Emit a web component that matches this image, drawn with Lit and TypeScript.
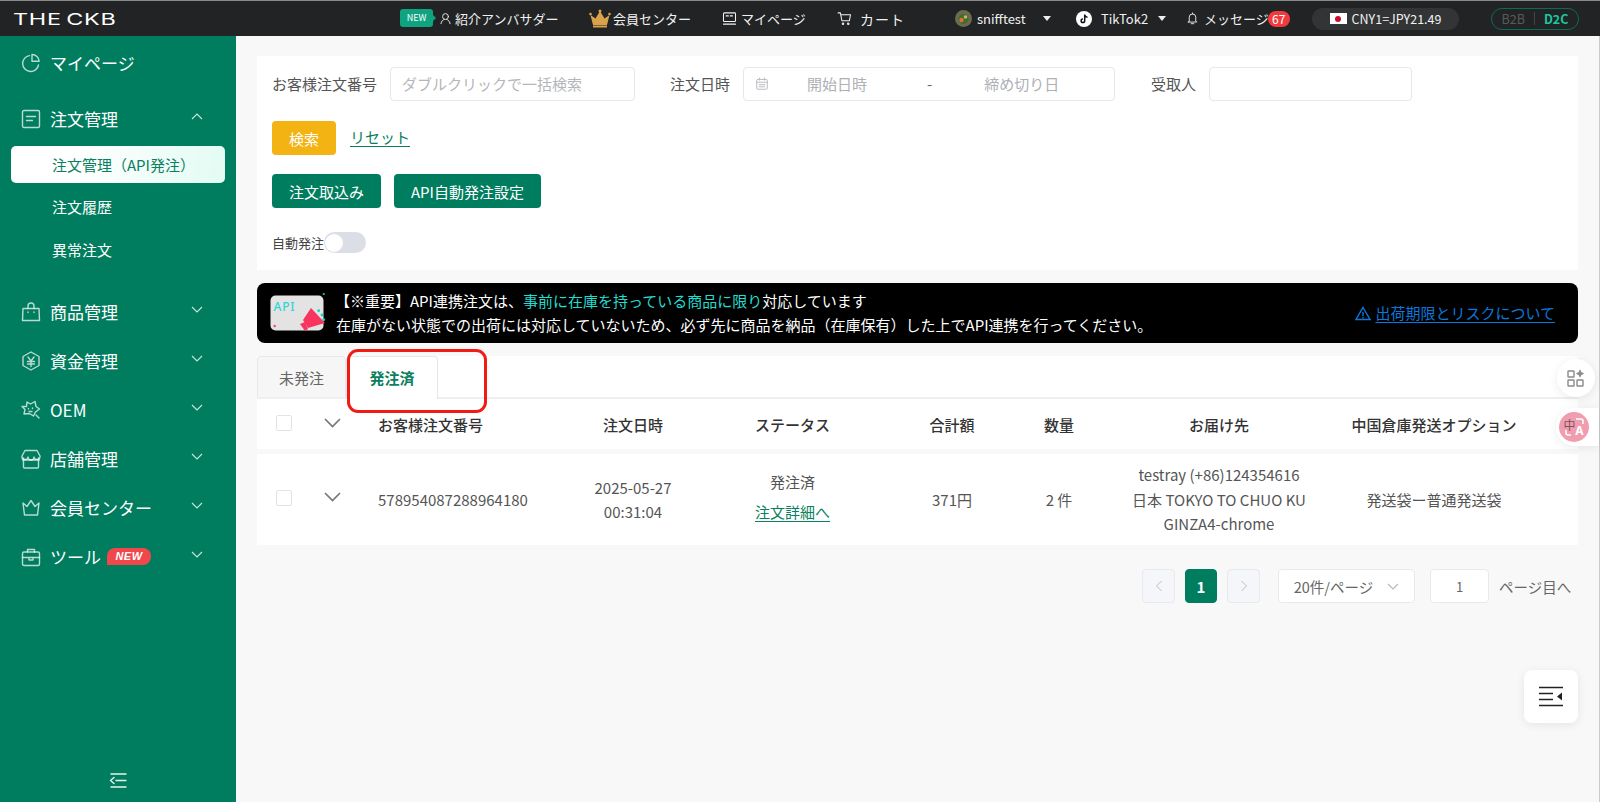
import { LitElement, html, css, svg } from 'lit';
import { customElement } from 'lit/decorators.js';

const GREEN = '#007d5e';

const ic = (body: unknown, size = 20, vb = 20) => html`<svg
  width=${size} height=${size} viewBox="0 0 ${vb} ${vb}" fill="none" stroke="currentColor" stroke-width="1.4"
  stroke-linecap="round" stroke-linejoin="round">${body}</svg>`;

const menuIcons: Record<string, unknown> = {
  home: svg`<path d="M8.5 2.6a8 8 0 1 0 9 9.4"/><path d="M11 1.5v6.8h7.2A7.2 7.2 0 0 0 11 1.5z"/>`,
  order: svg`<rect x="1.5" y="1.5" width="17" height="17" rx="1.5"/><path d="M5.5 7.5h9M5.5 11.5h6"/>`,
  goods: svg`<path d="M2 6.5h16l.5 12h-17z"/><path d="M7 6.5V4a3 3 0 0 1 6 0v2.5M7 10v.5M13 10v.5"/>`,
  money: svg`<path d="M10 1l8 4.5v9L10 19l-8-4.5v-9z"/><path d="M7 6l3 4 3-4M6.500 10.500h7M6.500 13h7M10 10v5.500"/>`,
  oem: svg`<path d="M6 2l3.500 2 4.500-2.500 1 5 3.500 2.500-4 3-2 4-4-2.500-5.500.5 1-4.500L1 6.500 5.500 6.500z"/><path d="M15 15l3 3M7.500 8.500v.5M11.500 8v.5M8 11.500h3"/>`,
  shop: svg`<path d="M4 1.500h12l3 5.500a3 3 0 0 1-6 1 3 3 0 0 1-6 0 3 3 0 0 1-6-1z"/><path d="M1.500 11h17M2.500 9v9a1 1 0 0 0 1 1h13a1 1 0 0 0 1-1V9"/>`,
  member: svg`<path d="M2 5l4 3.500L10 2.500l4 6L18 5l-1.500 12h-13z"/>`,
  tool: svg`<rect x="1.500" y="5" width="17" height="13.500" rx="1.500"/><path d="M6.500 5V2.500h7V5M1.500 10.500h17M8 10.500v2.500h4v-2.500"/>`,
};

const menu = [
  { icon: 'goods', label: '商品管理' },
  { icon: 'money', label: '資金管理' },
  { icon: 'oem', label: 'OEM' },
  { icon: 'shop', label: '店舗管理' },
  { icon: 'member', label: '会員センター' },
  { icon: 'tool', label: 'ツール', isNew: true },
];

const chevron = (up = false) => html`<svg class="chev" width="12" height="7" viewBox="0 0 12 7" fill="none"
  stroke="currentColor" stroke-width="1.100"><path d=${up ? 'M1 6l5-5 5 5' : 'M1 1l5 5 5-5'}/></svg>`;

@customElement('app-root')
export class AppRoot extends LitElement {
  static styles = css`
    :host {
      display: block;
      width: 1600px;
      height: 802px;
      overflow: hidden;
      position: relative;
      background: #f8f8f8;
      font-family: 'Noto Sans CJK JP', 'Noto Sans', sans-serif;
      color: #333;
    }
    svg { display: block; flex: none; }

    /* top bar */
    .top {
      height: 35px;
      border-top: 1px solid #8a8a8a;
      background: #222324;
      color: #f1f1f1;
      display: flex;
      align-items: center;
      font-size: 13px;
      white-space: nowrap;
      box-sizing: content-box;
    }
    .logo {
      margin-left: 13px;
      width: 108px;
      font-family: 'Inter', sans-serif;
      font-weight: 400;
      font-size: 16.500px;
      letter-spacing: 0.5px;
      word-spacing: -2px;
      color: #fff;
      margin-right: 279px;
      transform: scaleX(1.42);
      transform-origin: left center;
    }
    .nav { display: flex; align-items: center; }
    .new-tag {
      width: 33px;
      height: 18px;
      margin-top: -2px;
      background: #0fa37f;
      border-radius: 3px;
      color: #fff;
      font-size: 9px;
      line-height: 18px;
      text-align: center;
      position: relative;
      margin-right: 6px;
    }
    .new-tag::after {
      content: '';
      position: absolute;
      left: 33px;
      top: 6px;
      border: 3px solid transparent;
      border-left-color: #0fa37f;
    }
    .amb { width: 150px; gap: 3px; }
    .vip { width: 133px; gap: 2px; }
    .mine { width: 115px; gap: 4px; }
    .cart { width: 118px; gap: 8px; font-size: 14px; letter-spacing: 1px; }
    .shop { width: 121px; gap: 5px; }
    .tiktok { width: 110px; gap: 9px; }
    .msg { width: 126px; gap: 5px; }
    .caret {
      border: 4px solid transparent;
      border-top: 5px solid #eee;
      border-bottom: 0;
    }
    .shop .caret { margin-left: 12px; }
    .tiktok .caret { margin-left: 1px; }
    .badge {
      margin-left: -6px;
      background: #f03a3e;
      color: #fff;
      width: 22px;
      height: 16px;
      border-radius: 8px;
      font-size: 12px;
      line-height: 16px;
      text-align: center;
    }
    .rate {
      width: 147px;
      height: 22px;
      border-radius: 11px;
      background: #333435;
      display: flex;
      align-items: center;
      justify-content: center;
      gap: 5px;
      font-size: 12.500px;
      margin-right: 32px;
    }
    .flag {
      width: 17px;
      height: 11px;
      background: #fff;
      display: flex;
      align-items: center;
      justify-content: center;
    }
    .flag i { width: 6px; height: 6px; border-radius: 50%; background: #c8102e; }
    .mode {
      width: 88px;
      height: 22px;
      box-sizing: border-box;
      border: 1.500px solid #0d6b54;
      border-radius: 11px;
      display: flex;
      align-items: center;
      justify-content: center;
      gap: 9px;
      font-size: 12.500px;
      color: #5a5a5a;
    }
    .mode i { width: 1px; height: 13px; background: #444; }
    .mode b { color: #18c9a0; font-weight: 700; }

    .body { display: flex; height: 766px; }

    /* side menu */
    .side {
      width: 236px;
      flex: none;
      background: ${css([GREEN] as unknown as TemplateStringsArray)};
      color: #fff;
      padding-top: 2px;
      box-sizing: border-box;
      position: relative;
    }
    .item {
      height: 49px;
      display: flex;
      align-items: center;
      padding-left: 21px;
      font-size: 17px;
      position: relative;
    }
    .item svg.mi { color: rgba(255, 255, 255, 0.72); margin-right: 9px; }
    .item .chev { position: absolute; left: 191px; top: 19px; color: rgba(255, 255, 255, 0.8); }
    .first { margin-bottom: 7px; }
    .tag {
      margin-left: 6px;
      height: 17px;
      width: 44px;
      background: #f0474c;
      border-radius: 8px 8px 8px 0;
      font: italic 700 11px/17px 'Liberation Sans', sans-serif;
      letter-spacing: 0.5px;
      text-align: center;
    }
    .subs { margin-bottom: 18px; display: flex; flex-direction: column; gap: 6px; padding: 3px 11px 0; }
    .sub {
      height: 37px;
      line-height: 35px;
      padding-left: 41px;
      font-size: 15px;
      border-radius: 5px;
    }
    .sub.on {
      line-height: 37px;
      background: linear-gradient(100deg, #fff 30%, #e2fbf3);
      color: #0b7f60;
    }
    .fold { position: absolute; left: 108px; bottom: 11px; color: #e8f3ef; }

    /* main column */
    .main {
      flex: 1;
      padding: 20px 21px 0 21px;
      min-width: 0;
      position: relative;
      border-right: 1px solid #c9c9c9;
    }
    .panel { background: #fff; height: 214px; padding: 11px 15px; box-sizing: border-box; }
    .row { display: flex; align-items: center; }
    .lbl { font-size: 15px; color: #555; white-space: nowrap; padding-bottom: 2px; }
    .inp {
      height: 34px;
      box-sizing: border-box;
      border: 1px solid #e6e7ee;
      border-radius: 4px;
      background: #fff;
      font-size: 15px;
      color: #b4b6bb;
      display: flex;
      align-items: center;
      padding-bottom: 1px;
    }
    .inp-no { width: 245px; margin: 0 35px 0 13px; padding-left: 11px; }
    .inp-date { width: 372px; margin: 0 36px 0 13px; padding-left: 11px; color: #aeb0b6; }
    .inp-date svg { margin-right: 38px; color: #b8bac0; }
    .inp-date .dash { margin: 0 52px 0 60px; color: #666; }
    .inp-to { width: 203px; margin-left: 13px; }
    .actions { margin-top: 20px; gap: 14px; }
    .btn {
      height: 34px;
      border-radius: 4px;
      color: #fff;
      font-size: 15px;
      background: ${css([GREEN] as unknown as TemplateStringsArray)};
      display: flex;
      align-items: center;
      justify-content: center;
      box-sizing: border-box;
    }
    .btn.yellow { width: 64px; background: #f3b312; }
    .reset {
      color: #0b7f60;
      font-size: 15px;
      text-decoration: underline;
      text-underline-offset: 3px;
      margin-top: -3px;
    }
    .tools { margin-top: 19px; gap: 13px; }
    .b1 { width: 109px; }
    .b2 { width: 147px; }
    .auto { margin-top: 24px; font-size: 13px; color: #444; }
    .switch {
      width: 42px;
      height: 21px;
      border-radius: 11px;
      background: #dcdee6;
      position: relative;
    }
    .switch::after {
      content: '';
      position: absolute;
      left: 1px;
      top: 1.500px;
      width: 18px;
      height: 18px;
      background: #fff;
      border-radius: 50%;
    }

    .notice {
      margin-top: 13px;
      height: 60px;
      background: #000;
      border-radius: 8px;
      color: #fff;
      display: flex;
      align-items: center;
      padding-left: 13px;
      font-size: 15px;
      line-height: 24px;
      white-space: nowrap;
    }
    .pic {
      width: 53px;
      height: 36px;
      flex: none;
      margin-right: 13px;
      overflow: visible;
    }
    .notice em { font-style: normal; color: #22dcd0; }
    .risk {
      margin-left: auto;
      margin-right: 23px;
      display: flex;
      align-items: center;
      gap: 4px;
      color: #0a78dc;
      font-size: 15px;
      text-decoration: underline;
      text-underline-offset: 3px;
    }
    .hint { margin-left: -1px; }

    .tabs {
      margin-top: 13px;
      background: #fff;
      height: 43px;
      display: flex;
      border-bottom: 2px solid #eeeff3;
      box-sizing: border-box;
    }
    .tab {
      width: 89px;
      height: 41px;
      box-sizing: border-box;
      background: #f6f6f6;
      border: 1px solid #e8e8e8;
      border-bottom: 0;
      border-radius: 4px 4px 0 0;
      font-size: 15px;
      line-height: 41px;
      text-align: center;
      color: #666;
    }
    .tab.on {
      width: 92px;
      background: #fff;
      border-color: #e6e6e6;
      border-bottom: 0;
      height: 43px;
      color: #0b7f60;
      font-weight: 700;
    }
    .mark {
      position: absolute;
      left: 347px;
      top: 349px;
      width: 140px;
      height: 64px;
      box-sizing: border-box;
      border: 3px solid #f01c14;
      border-radius: 11px;
    }

    .grid {
      display: grid;
      grid-template-columns: 54px 44px 211px 134px 185px 134px 80px 240px 190px 49px;
      align-items: center;
      background: #fff;
      font-size: 15px;
      text-align: center;
      color: #555;
    }
    .head { height: 50px; font-weight: 500; color: #333; margin-bottom: 5px; line-height: 1; padding-top: 1px; box-sizing: border-box; }
    .rowx { height: 91px; line-height: 24.500px; padding-top: 1px; box-sizing: border-box; }
    .left { text-align: left; padding-left: 23px; }
    .cb {
      width: 14px;
      height: 14px;
      border: 1px solid #e2e3ea;
      border-radius: 2px;
      background: #fff;
      margin: -3px 0 0 19px;
    }
    .gv { color: #777; margin: -4px 0 0 13px; }
    .rowx .cb { margin-top: -4px; }
    .rowx .gv { margin-top: -7px; }
    .st { margin-top: -6px; }
    .st span { display: block; line-height: 30px; }
    .st a { display: block; line-height: 30px; color: #0b7f60; text-decoration: underline; text-underline-offset: 3px; }

    .pager {
      margin-top: 24px;
      padding-left: 885px;
      display: flex;
      align-items: center;
      font-size: 14.500px;
      color: #666;
    }
    .pg {
      height: 34px;
      box-sizing: border-box;
      border: 1px solid #e8e9ef;
      border-radius: 4px;
      display: flex;
      align-items: center;
      justify-content: center;
      background: #fff;
    }
    .pg.arrow { width: 33px; background: #f5f6f9; color: #bcbec5; }
    .pg.cur {
      width: 32px;
      margin: 0 10px;
      background: ${css([GREEN] as unknown as TemplateStringsArray)};
      border-color: ${css([GREEN] as unknown as TemplateStringsArray)};
      color: #fff;
      font-weight: 700;
      font-size: 15px;
    }
    .pg.size { width: 137px; margin-left: 18px; gap: 14px; }
    .pg.size .chev { color: #b5b7bd; }
    .pg.page { width: 59px; margin: 0 10px 0 15px; font-size: 13px; }

    .fab {
      position: absolute;
      background: #fff;
      display: flex;
      align-items: center;
      justify-content: center;
      box-shadow: 0 2px 10px rgba(0, 0, 0, 0.08);
    }
    .f1 { left: 1557px; top: 359px; width: 38px; height: 38px; border-radius: 50%; color: #8b8b8b; }
    .f2 { left: 1556px; top: 408px; width: 43px; height: 38px; border-radius: 19px 0 0 19px; }
    .pink {
      width: 30px;
      height: 30px;
      margin-left: -8px;
      border-radius: 50%;
      background: #f19db0;
      position: relative;
      font-size: 12px;
      line-height: 14px;
    }
    .pink svg { position: absolute; left: 0; top: 0; }
    .pink .z { position: absolute; left: 5px; top: 6px; color: #80525e; }
    .pink .a { position: absolute; right: 5px; bottom: 4px; color: #fff; font-weight: 700; font-family: 'Noto Sans', sans-serif; }
    .f3 { left: 1524px; top: 670px; width: 54px; height: 53px; border-radius: 8px; color: #222; }
  `;

  render() {
    return html`
      <div class="top">
        <div class="logo">THE CKB</div>
        <div class="new-tag">NEW</div>
        <div class="nav amb">
          ${ic(svg`<circle cx="10" cy="7" r="4.500"/><path d="M3 18c.5-4 3-6 5-6.500M17 18c-.5-4-3-6-5-6.500"/>`, 13)}
          <span>紹介アンバサダー</span>
        </div>
        <div class="nav vip">
          <svg width="22" height="19" viewBox="0 0 22 19"><path fill="#d9a24a" d="M4 16L1.500 6l5 3.500L11 2l4.500 7.500 5-3.500L18 16z"/><rect x="4" y="16.500" width="14" height="2" fill="#d9a24a"/><circle cx="11" cy="2" r="1.500" fill="#d9a24a"/><circle cx="1.500" cy="5" r="1.300" fill="#d9a24a"/><circle cx="20.500" cy="5" r="1.300" fill="#d9a24a"/></svg>
          <span>会員センター</span>
        </div>
        <div class="nav mine">
          ${ic(svg`<rect x="2" y="2.500" width="16" height="11.500" rx="1"/><path d="M5.500 6.500h3M11 6.500h3M2 17.500h16"/>`, 15)}
          <span>マイページ</span>
        </div>
        <div class="nav cart">
          ${ic(svg`<path d="M1.500 2.500h3l2 10.500h10l1.500-8H5"/><circle cx="8" cy="17" r="1"/><circle cx="15" cy="17" r="1"/>`, 15)}
          <span>カート</span>
        </div>
        <div class="nav shop">
          <svg width="17" height="17" viewBox="0 0 17 17"><circle cx="8.500" cy="8.500" r="8.500" fill="#6d6a52"/><circle cx="8.500" cy="9" r="5" fill="#3f6b35"/><circle cx="6.500" cy="10" r="2.200" fill="#d9742c"/><circle cx="10.500" cy="7" r="1.800" fill="#b9c44a"/></svg>
          <span>snifftest</span><i class="caret"></i>
        </div>
        <div class="nav tiktok">
          <svg width="16" height="16" viewBox="0 0 16 16"><circle cx="8" cy="8" r="8" fill="#fff"/><path d="M8.700 3.500v6.300a1.800 1.800 0 1 1-1.800-1.800M8.700 3.500c.2 1.500 1.200 2.500 2.800 2.700" fill="none" stroke="#111" stroke-width="1.500"/></svg>
          <span>TikTok2</span><i class="caret"></i>
        </div>
        <div class="nav msg">
          ${ic(svg`<path d="M5 14V8a5 5 0 0 1 10 0v6l1.500 1.500h-13zM8 18h4M10 3V1.500"/>`, 13)}
          <span>メッセージ</span><span class="badge">67</span>
        </div>
        <div class="rate"><span class="flag"><i></i></span>CNY1=JPY21.49</div>
        <div class="mode"><span>B2B</span><i></i><b>D2C</b></div>
      </div>

      <div class="body">
        <aside class="side">
          <div class="item first">${this.menuIcon('home')}マイページ</div>
          <div class="item">${this.menuIcon('order')}注文管理${chevron(true)}</div>
          <div class="subs">
            <div class="sub on">注文管理（API発注）</div>
            <div class="sub">注文履歴</div>
            <div class="sub">異常注文</div>
          </div>
          ${menu.map(
            (m) => html`<div class="item">
              ${this.menuIcon(m.icon)}${m.label}${m.isNew ? html`<span class="tag">NEW</span>` : ''}${chevron()}
            </div>`
          )}
          <div class="fold">
            ${ic(svg`<path d="M3 3h15M8 9.500h10M3 16h15M6 6.500L2.500 9.500 6 12.500"/>`, 20)}
          </div>
        </aside>

        <main class="main">
          <section class="panel">
            <div class="row">
              <span class="lbl">お客様注文番号</span>
              <div class="inp inp-no">ダブルクリックで一括検索</div>
              <span class="lbl">注文日時</span>
              <div class="inp inp-date">
                ${ic(svg`<rect x="2.500" y="3.500" width="15" height="14" rx="1"/><path d="M2.500 7.500h15M6.500 1.500v3M13.500 1.500v3M6 11h8M6 14h8"/>`, 14)}
                <span>開始日時</span><span class="dash">-</span><span>締め切り日</span>
              </div>
              <span class="lbl">受取人</span>
              <div class="inp inp-to"></div>
            </div>
            <div class="row actions">
              <div class="btn yellow">検索</div>
              <span class="reset">リセット</span>
            </div>
            <div class="row tools">
              <div class="btn b1">注文取込み</div>
              <div class="btn b2">API自動発注設定</div>
            </div>
            <div class="row auto"><span>自動発注</span><span class="switch"></span></div>
          </section>

          <section class="notice">
            <svg class="pic" viewBox="0 0 53 36">
              <rect x="0.500" y="0.500" width="53" height="35" rx="5" fill="#e3e3e3"/>
              <text x="3.500" y="16" font-family="Noto Sans" font-size="12" font-weight="500" letter-spacing="0.8" fill="#2fd6d6">API</text>
              <circle cx="4.700" cy="31" r="1.300" fill="#f0527a"/>
              <path d="M33 25l8-12 14 15-17 5z" fill="#f7355f"/>
              <path d="M30 29l5-2 3 7-3 2z" fill="#f7355f"/>
              <circle cx="48.700" cy="15.700" r="1.400" fill="#16d2c6"/>
              <circle cx="52" cy="20" r="1.400" fill="#16d2c6"/>
              <circle cx="53.700" cy="24.700" r="1.400" fill="#16d2c6"/>
              <circle cx="53.700" cy="-1" r="1.100" fill="#16d2c6"/>
            </svg>
            <div>
              <div class="hint">【※重要】API連携注文は、<em>事前に在庫を持っている商品に限り</em>対応しています</div>
              <div>在庫がない状態での出荷には対応していないため、必ず先に商品を納品（在庫保有）した上でAPI連携を行ってください。</div>
            </div>
            <div class="risk">
              <svg width="16" height="15" viewBox="0 0 16 15" fill="none" stroke="currentColor" stroke-width="1.400"><path d="M8 1.500L15 13.500H1zM8 6v4M8 11v1.200"/></svg>
              <span>出荷期限とリスクについて</span>
            </div>
          </section>

          <div class="tabs">
            <div class="tab">未発注</div>
            <div class="tab on">発注済</div>
          </div>

          <div class="grid head">
            <div class="cb"></div>
            <div class="gv">${this.bigChevron()}</div>
            <div class="left">お客様注文番号</div>
            <div>注文日時</div>
            <div>ステータス</div>
            <div>合計額</div>
            <div>数量</div>
            <div>お届け先</div>
            <div>中国倉庫発送オプション</div>
            <div></div>
          </div>
          <div class="grid rowx">
            <div class="cb"></div>
            <div class="gv">${this.bigChevron()}</div>
            <div class="left">578954087288964180</div>
            <div>2025-05-27<br />00:31:04</div>
            <div class="st"><span>発注済</span><a>注文詳細へ</a></div>
            <div>371円</div>
            <div>2 件</div>
            <div>testray (+86)124354616<br />日本 TOKYO TO CHUO KU<br />GINZA4-chrome</div>
            <div>発送袋ー普通発送袋</div>
            <div></div>
          </div>

          <div class="pager">
            <div class="pg arrow"><svg width="8" height="12" viewBox="0 0 8 12" fill="none" stroke="currentColor"><path d="M6.500 1L1.500 6l5 5"/></svg></div>
            <div class="pg cur">1</div>
            <div class="pg arrow"><svg width="8" height="12" viewBox="0 0 8 12" fill="none" stroke="currentColor"><path d="M1.500 1l5 5-5 5"/></svg></div>
            <div class="pg size"><span>20件/ページ</span>${chevron()}</div>
            <div class="pg page">1</div>
            <span>ページ目へ</span>
          </div>
        </main>
      </div>

      <div class="mark"></div>
      <div class="fab f1">
        ${ic(svg`<rect x="2" y="3" width="6" height="6" rx=".5"/><rect x="2" y="12" width="6" height="6" rx=".5"/><rect x="11" y="12" width="6" height="6" rx=".5"/><path d="M14 2.500c.2 2 .8 2.800 3 3-2.200.2-2.800 1-3 3-.2-2-.8-2.800-3-3 2.200-.2 2.800-1 3-3z" fill="currentColor"/>`, 20)}
      </div>
      <div class="fab f2">
        <div class="pink">
          <svg width="30" height="30" viewBox="0 0 30 30" fill="none" stroke="#fff" stroke-width="1.500"><path d="M17 7h5a2 2 0 0 1 2 2v3M7 18v3a2 2 0 0 0 2 2h3"/></svg>
          <span class="z">中</span><span class="a">A</span>
        </div>
      </div>
      <div class="fab f3">
        <svg width="24" height="21" viewBox="0 0 24 21" fill="none" stroke="currentColor" stroke-width="1.600"><path d="M0 1.500h24M0 7.500h14M0 13.500h14M0 19.500h24"/><path d="M23 6.500v8l-5-4z" fill="currentColor" stroke="none"/></svg>
      </div>
    `;
  }

  private menuIcon(name: string) {
    return html`<svg class="mi" width="20" height="20" viewBox="0 0 20 20" fill="none" stroke="currentColor"
      stroke-width="1.400" stroke-linecap="round" stroke-linejoin="round">${menuIcons[name]}</svg>`;
  }

  private bigChevron() {
    return html`<svg width="17" height="10" viewBox="0 0 17 10" fill="none" stroke="currentColor" stroke-width="1.700"><path d="M1 1l7.500 7.500L16 1"/></svg>`;
  }
}

declare global {
  interface HTMLElementTagNameMap {
    'app-root': AppRoot;
  }
}
